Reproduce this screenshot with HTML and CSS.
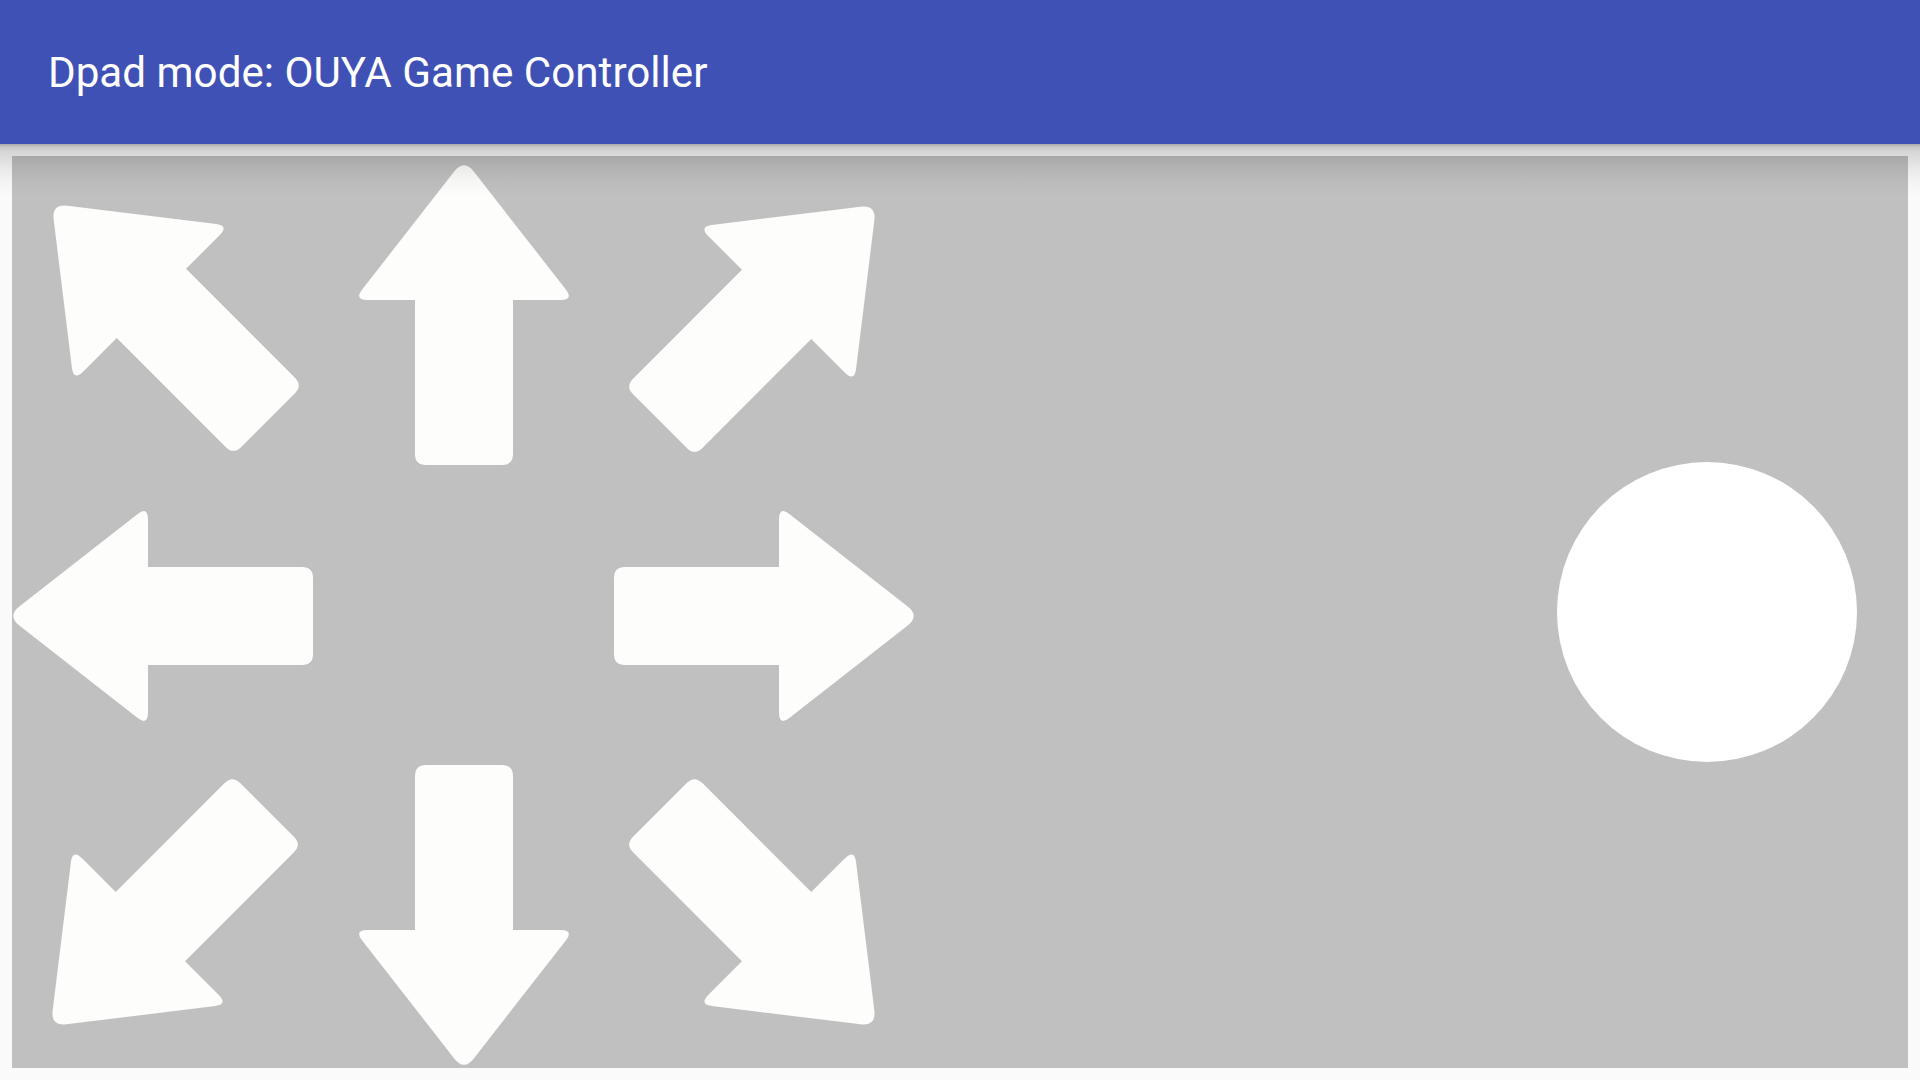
FILE: index.html
```html
<!DOCTYPE html>
<html lang="en">
<head>
<meta charset="utf-8">
<title>Dpad mode</title>
<link rel="stylesheet" href="styles.css">
</head>
<body>
<header class="toolbar">
  <h1 class="title">Dpad mode: OUYA Game Controller</h1>
</header>
<main class="surface">
  <svg class="dpad" width="912" height="912" viewBox="0 0 912 912" aria-label="Directional pad">
    <defs>
      <path id="arrow" d="M 9.8 -143.4 L 102 -25.3 Q 110 -15 96 -15 L 49 -15 L 49 139 Q 49 150 38 150 L -38 150 Q -49 150 -49 139 L -49 -15 L -96 -15 Q -110 -15 -102 -25.3 L -9.8 -143.4 Q 0 -156 9.8 -143.4 Z"/>
    </defs>
    <g class="arrows">
      <use href="#arrow" transform="translate(150 158) rotate(-45)"/>
      <use href="#arrow" transform="translate(452 159) rotate(0)"/>
      <use href="#arrow" transform="translate(754 159) rotate(45)"/>
      <use href="#arrow" transform="translate(151 460) rotate(270)"/>
      <use href="#arrow" transform="translate(752 460) rotate(90)"/>
      <use href="#arrow" transform="translate(149 760) rotate(225)"/>
      <use href="#arrow" transform="translate(452 759) rotate(180)"/>
      <use href="#arrow" transform="translate(754 760) rotate(135)"/>
    </g>
  </svg>
  <div class="stick"></div>
</main>
</body>
</html>
```
FILE: styles.css
```css
html, body {
  margin: 0;
  padding: 0;
}
body {
  width: 1920px;
  height: 1080px;
  background: #fafafa;
  overflow: hidden;
  font-family: Roboto, "Liberation Sans", sans-serif;
}
.toolbar {
  position: relative;
  z-index: 2;
  height: 144px;
  background: #3f51b5;
  display: flex;
  align-items: center;
  padding-left: 48px;
  padding-top: 1px;
  box-sizing: border-box;
}
.toolbar::after {
  content: "";
  position: absolute;
  left: 0;
  right: 0;
  top: 100%;
  height: 52px;
  pointer-events: none;
  background: linear-gradient(
    rgba(0, 0, 0, 0.32) 0px,
    rgba(0, 0, 0, 0.2) 3px,
    rgba(0, 0, 0, 0.14) 8px,
    rgba(0, 0, 0, 0.12) 13px,
    rgba(0, 0, 0, 0.07) 24px,
    rgba(0, 0, 0, 0.03) 36px,
    rgba(0, 0, 0, 0) 52px
  );
}
.title {
  margin: 0;
  color: #ffffff;
  font-size: 42.2px;
  font-weight: 400;
}
.surface {
  margin: 12px;
  height: 912px;
  background: #c0c0c0;
  display: flex;
  align-items: center;
  justify-content: space-between;
}
.dpad {
  display: block;
  flex: none;
}
.arrows use {
  fill: #fdfdfb;
}
.stick {
  width: 300px;
  height: 300px;
  border-radius: 50%;
  background: #ffffff;
  margin-right: 51px;
  flex: none;
}
```
